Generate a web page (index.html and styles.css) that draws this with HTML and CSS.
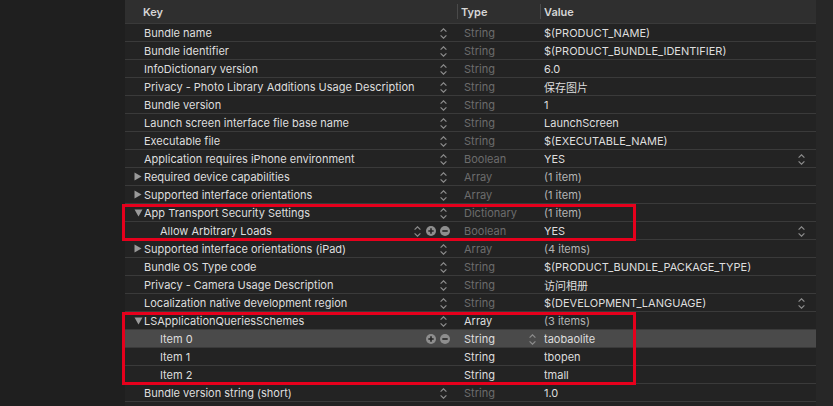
FILE: index.html
```html
<!DOCTYPE html>
<html>
<head>
<meta charset="utf-8">
<link rel="stylesheet" href="styles.css">
</head>
<body>
<svg width="0" height="0" class="defs">
  <defs>
    <symbol id="stepper" viewBox="0 0 7 11">
      <path d="M0.6 3.6 L3.5 0.8 L6.4 3.6 M0.6 7.4 L3.5 10.2 L6.4 7.4" fill="none" stroke="#8c8c8c" stroke-width="1.2"/>
    </symbol>
    <symbol id="plus" viewBox="0 0 10 10">
      <circle cx="5" cy="5" r="5" fill="#8e8e8e"/>
      <path d="M2.3 5 H7.7 M5 2.3 V7.7" stroke="#262626" stroke-width="1.6"/>
    </symbol>
    <symbol id="minus" viewBox="0 0 10 10">
      <circle cx="5" cy="5" r="5" fill="#8e8e8e"/>
      <path d="M2.3 5 H7.7" stroke="#262626" stroke-width="1.6"/>
    </symbol>
    <symbol id="tri-right" viewBox="0 0 8 9">
      <polygon points="0.5,0.5 7.5,4.5 0.5,8.5" fill="#9a9a9a"/>
    </symbol>
    <symbol id="tri-down" viewBox="0 0 9 8">
      <polygon points="0.5,0.5 8.5,0.5 4.5,7.5" fill="#9a9a9a"/>
    </symbol>
  </defs>
</svg>
<div class="page">
  <div class="side"></div>
  <div class="table">
    <div class="row head">
      <div class="key"><span class="text">Key</span></div>
      <div class="type"><span class="sep"></span><span class="text">Type</span></div>
      <div class="value"><span class="sep"></span><span class="text">Value</span></div>
    </div>

    <div class="row">
      <div class="key"><span class="disc"></span><span class="text">Bundle name</span><span class="ctrls"><svg class="step"><use href="#stepper"/></svg></span></div>
      <div class="type dim">String</div>
      <div class="value"><span class="text">$(PRODUCT_NAME)</span></div>
    </div>
    <div class="row">
      <div class="key"><span class="disc"></span><span class="text">Bundle identifier</span><span class="ctrls"><svg class="step"><use href="#stepper"/></svg></span></div>
      <div class="type dim">String</div>
      <div class="value"><span class="text">$(PRODUCT_BUNDLE_IDENTIFIER)</span></div>
    </div>
    <div class="row">
      <div class="key"><span class="disc"></span><span class="text">InfoDictionary version</span><span class="ctrls"><svg class="step"><use href="#stepper"/></svg></span></div>
      <div class="type dim">String</div>
      <div class="value"><span class="text">6.0</span></div>
    </div>
    <div class="row">
      <div class="key"><span class="disc"></span><span class="text">Privacy - Photo Library Additions Usage Description</span><span class="ctrls"><svg class="step"><use href="#stepper"/></svg></span></div>
      <div class="type dim">String</div>
      <div class="value"><span class="text">保存图片</span></div>
    </div>
    <div class="row">
      <div class="key"><span class="disc"></span><span class="text">Bundle version</span><span class="ctrls"><svg class="step"><use href="#stepper"/></svg></span></div>
      <div class="type dim">String</div>
      <div class="value"><span class="text">1</span></div>
    </div>
    <div class="row">
      <div class="key"><span class="disc"></span><span class="text">Launch screen interface file base name</span><span class="ctrls"><svg class="step"><use href="#stepper"/></svg></span></div>
      <div class="type dim">String</div>
      <div class="value"><span class="text">LaunchScreen</span></div>
    </div>
    <div class="row">
      <div class="key"><span class="disc"></span><span class="text">Executable file</span><span class="ctrls"><svg class="step"><use href="#stepper"/></svg></span></div>
      <div class="type dim">String</div>
      <div class="value"><span class="text">$(EXECUTABLE_NAME)</span></div>
    </div>
    <div class="row">
      <div class="key"><span class="disc"></span><span class="text">Application requires iPhone environment</span><span class="ctrls"><svg class="step"><use href="#stepper"/></svg></span></div>
      <div class="type dim">Boolean</div>
      <div class="value"><span class="text">YES</span><svg class="step"><use href="#stepper"/></svg></div>
    </div>
    <div class="row">
      <div class="key"><span class="disc"><svg class="tri-r"><use href="#tri-right"/></svg></span><span class="text">Required device capabilities</span><span class="ctrls"><svg class="step"><use href="#stepper"/></svg></span></div>
      <div class="type dim">Array</div>
      <div class="value"><span class="text count">(1 item)</span></div>
    </div>
    <div class="row">
      <div class="key"><span class="disc"><svg class="tri-r"><use href="#tri-right"/></svg></span><span class="text">Supported interface orientations</span><span class="ctrls"><svg class="step"><use href="#stepper"/></svg></span></div>
      <div class="type dim">Array</div>
      <div class="value"><span class="text count">(1 item)</span></div>
    </div>

    <div class="group g1">
      <div class="row">
        <div class="key"><span class="disc"><svg class="tri-d"><use href="#tri-down"/></svg></span><span class="text">App Transport Security Settings</span><span class="ctrls"><svg class="step"><use href="#stepper"/></svg></span></div>
        <div class="type dim">Dictionary</div>
        <div class="value"><span class="text count">(1 item)</span></div>
      </div>
      <div class="row">
        <div class="key child"><span class="text">Allow Arbitrary Loads</span><span class="ctrls wide"><svg class="step"><use href="#stepper"/></svg><svg class="pm"><use href="#plus"/></svg><svg class="pm"><use href="#minus"/></svg></span></div>
        <div class="type dim">Boolean</div>
        <div class="value"><span class="text">YES</span><svg class="step"><use href="#stepper"/></svg></div>
      </div>
    </div>

    <div class="row">
      <div class="key"><span class="disc"><svg class="tri-r"><use href="#tri-right"/></svg></span><span class="text">Supported interface orientations (iPad)</span><span class="ctrls"><svg class="step"><use href="#stepper"/></svg></span></div>
      <div class="type dim">Array</div>
      <div class="value"><span class="text count">(4 items)</span></div>
    </div>
    <div class="row">
      <div class="key"><span class="disc"></span><span class="text">Bundle OS Type code</span><span class="ctrls"><svg class="step"><use href="#stepper"/></svg></span></div>
      <div class="type dim">String</div>
      <div class="value"><span class="text">$(PRODUCT_BUNDLE_PACKAGE_TYPE)</span></div>
    </div>
    <div class="row">
      <div class="key"><span class="disc"></span><span class="text">Privacy - Camera Usage Description</span><span class="ctrls"><svg class="step"><use href="#stepper"/></svg></span></div>
      <div class="type dim">String</div>
      <div class="value"><span class="text">访问相册</span></div>
    </div>
    <div class="row">
      <div class="key"><span class="disc"></span><span class="text">Localization native development region</span><span class="ctrls"><svg class="step"><use href="#stepper"/></svg></span></div>
      <div class="type dim">String</div>
      <div class="value"><span class="text">$(DEVELOPMENT_LANGUAGE)</span><svg class="step"><use href="#stepper"/></svg></div>
    </div>

    <div class="group g2">
      <div class="row">
        <div class="key"><span class="disc"><svg class="tri-d"><use href="#tri-down"/></svg></span><span class="text">LSApplicationQueriesSchemes</span><span class="ctrls"><svg class="step"><use href="#stepper"/></svg></span></div>
        <div class="type">Array</div>
        <div class="value"><span class="text count">(3 items)</span></div>
      </div>
      <div class="row selected">
        <div class="key child"><span class="text">Item 0</span><span class="ctrls wide"><svg class="pm"><use href="#plus"/></svg><svg class="pm"><use href="#minus"/></svg></span></div>
        <div class="type"><span class="text">String</span><svg class="step"><use href="#stepper"/></svg></div>
        <div class="value"><span class="text">taobaolite</span></div>
      </div>
      <div class="row">
        <div class="key child"><span class="text">Item 1</span></div>
        <div class="type">String</div>
        <div class="value"><span class="text">tbopen</span></div>
      </div>
      <div class="row">
        <div class="key child"><span class="text">Item 2</span></div>
        <div class="type">String</div>
        <div class="value"><span class="text">tmall</span></div>
      </div>
    </div>

    <div class="row">
      <div class="key"><span class="disc"></span><span class="text">Bundle version string (short)</span><span class="ctrls"><svg class="step"><use href="#stepper"/></svg></span></div>
      <div class="type dim">String</div>
      <div class="value"><span class="text">1.0</span></div>
    </div>
  </div>
  <div class="strip"></div>
</div>
</body>
</html>
```
FILE: styles.css
```css
html, body {
  margin: 0;
  padding: 0;
  background: #1f1f1f;
}
.defs {
  position: absolute;
  width: 0;
  height: 0;
}
.page {
  display: flex;
  height: 406px;
  font-family: Inter, "Liberation Sans", "Noto Sans CJK SC", sans-serif;
  font-size: 11px;
  color: #dedede;
}
.side {
  width: 125px;
  flex: none;
  background: #1f1f1f;
}
.table {
  width: 691px;
  flex: none;
  background: #232323;
  display: flex;
  flex-direction: column;
}
.strip {
  flex: 1;
  background: #272727;
}
.row {
  display: grid;
  grid-template-columns: 332px 83px 276px;
  height: 17px;
  border-bottom: 1px solid #3a3a3a;
  align-items: center;
}
.row.head {
  height: 23px;
  background: #2f2f2f;
  font-weight: 600;
  color: #d6d6d6;
}
.row.selected {
  background: #4a4a4a;
}
.key, .type, .value {
  display: flex;
  align-items: center;
  height: 100%;
  min-width: 0;
}
.key {
  padding-right: 7px;
}
.row.head .key {
  padding-left: 18px;
}
.key.child {
  padding-left: 35px;
}
.disc {
  width: 19px;
  padding-left: 9px;
  box-sizing: border-box;
  display: flex;
  align-items: center;
  flex: none;
}
.text {
  flex: 1;
  white-space: nowrap;
  overflow: hidden;
}
.ctrls {
  display: flex;
  align-items: center;
  gap: 4px;
  padding-right: 3px;
}
.ctrls.wide {
  padding-right: 0;
}
.step {
  width: 7px;
  height: 11px;
  flex: none;
  margin-top: 2px;
}
.ctrls.wide .step {
  margin-right: 1px;
}
.pm {
  width: 10px;
  height: 10px;
  flex: none;
}
.tri-r {
  width: 8px;
  height: 9px;
}
.tri-d {
  width: 9px;
  height: 8px;
}
.type {
  padding-left: 7px;
  padding-right: 4px;
}
.type.dim {
  color: #6c6c6c;
}
.row.head .type {
  padding-left: 0;
}
.row.head .value {
  padding-left: 0;
}
.sep {
  width: 1px;
  height: 15px;
  background: #4a4a4a;
  margin-right: 3px;
  flex: none;
}
.value {
  padding-left: 4px;
  padding-right: 11px;
}
.count {
  color: #b4b4b4;
}
.group {
  position: relative;
  display: flex;
  flex-direction: column;
}
.group::after {
  content: "";
  position: absolute;
  left: -3px;
  top: 0;
  bottom: -1px;
  width: 514px;
  border: 3px solid #e6001c;
  box-sizing: border-box;
  pointer-events: none;
}
```
